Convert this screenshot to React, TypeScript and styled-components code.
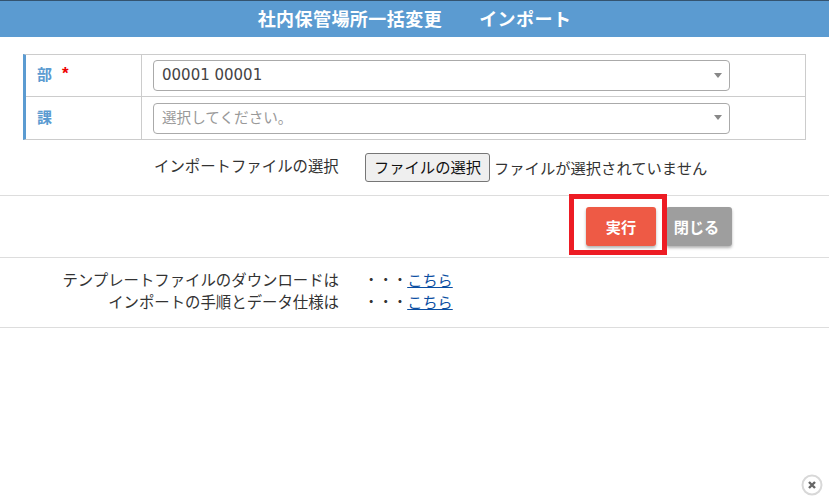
import styled, { createGlobalStyle } from "styled-components";

const GlobalStyle = createGlobalStyle`
  html, body {
    margin: 0;
    padding: 0;
    background: #fff;
    overflow: hidden;
  }
  body {
    font-family: "Liberation Sans", "Noto Sans CJK JP", sans-serif;
    color: #333;
  }
`;

const Pagina = styled.div`
  position: relative;
  width: 829px;
  height: 502px;
  background: #fff;
`;

const Cabecalho = styled.header`
  height: 37px;
  border-top: 1px solid #34536f;
  background: #5b9bd1;
  color: #fff;
  font-size: 18px;
  letter-spacing: 0.45px;
  font-weight: 700;
  display: flex;
  align-items: center;
  justify-content: center;
  gap: 37px;
  padding-bottom: 3px;
  box-sizing: border-box;
`;

const Tabela = styled.div`
  margin: 17px 23px 0 23px;
  border: 1px solid #ccc;
  border-left: 3px solid #5b9bd1;
  display: grid;
  grid-template-columns: 116px 1fr;
  grid-auto-rows: 42px;
`;

const Rotulo = styled.div<{ $ultimo?: boolean }>`
  display: flex;
  align-items: center;
  padding: 0 0 ${(p) => (p.$ultimo ? "3px" : "4px")} 11px;
  box-sizing: border-box;
  color: #5b9bd1;
  font-size: 15px;
  font-weight: 700;
  border-right: 1px solid #ccc;
  border-bottom: ${(p) => (p.$ultimo ? "none" : "1px solid #ccc")};
`;

const Obrigatorio = styled.span`
  color: #e00;
  margin-left: 10px;
  font-size: 17px;
`;

const Celula = styled.div<{ $ultimo?: boolean }>`
  display: flex;
  align-items: center;
  padding-left: 11px;
  border-bottom: ${(p) => (p.$ultimo ? "none" : "1px solid #ccc")};
`;

const Selecao = styled.div<{ $vazio?: boolean }>`
  width: 577px;
  height: 31px;
  box-sizing: border-box;
  border: 1px solid #aaa;
  border-radius: 4px;
  padding: 0 0 ${(p) => (p.$vazio ? "3px" : "2px")} 8px;
  display: flex;
  align-items: center;
  justify-content: space-between;
  font-family: "DejaVu Sans", "Noto Sans CJK JP", sans-serif;
  font-size: ${(p) => (p.$vazio ? "14.6px" : "15px")};
  color: ${(p) => (p.$vazio ? "#999" : "#444")};
`;

const Seta = styled.span`
  width: 0;
  height: 0;
  margin: 2px 7px 0 0;
  border-left: 4px solid transparent;
  border-right: 4px solid transparent;
  border-top: 5px solid #888;
`;

const LinhaArquivo = styled.div`
  height: 55px;
  display: flex;
  align-items: center;
  padding-left: 154px;
  font-size: 15.3px;
  color: #333;
`;

const RotuloArquivo = styled.span`
  width: 211px;
  margin-top: -5px;
  font-size: 15.4px;
  white-space: nowrap;
`;

const BotaoArquivo = styled.button`
  width: 125px;
  height: 29px;
  padding: 0 0 2px;
  margin: -1px 5px 0 0;
  box-sizing: border-box;
  border: 1px solid #767676;
  border-radius: 3px;
  background: #efefef;
  color: #111;
  font: inherit;
`;

const TextoArquivo = styled.span`
  margin: -2px 0 0 -1px;
`;

const Divisor = styled.hr`
  margin: 0;
  border: 0;
  border-top: 1px solid #ddd;
`;

const Acoes = styled.div`
  height: 61px;
  box-sizing: border-box;
  padding: 11px 97px 0 0;
  display: flex;
  justify-content: flex-end;
  align-items: flex-start;
  gap: 10px;
`;

const BotaoAcao = styled.button<{ $cor: string; $largura: number; $recuo?: number }>`
  width: ${(p) => p.$largura}px;
  height: 39px;
  padding: 0 ${(p) => p.$recuo ?? 0}px 2px 0;
  border: 0;
  border-radius: 3px;
  background: ${(p) => p.$cor};
  color: #fff;
  font-family: inherit;
  font-size: 15.2px;
  font-weight: 700;
  box-shadow: 0 2px 3px rgba(0, 0, 0, 0.3);
`;

const Destaque = styled.div`
  position: absolute;
  left: 569px;
  top: 194px;
  width: 98px;
  height: 61px;
  box-sizing: border-box;
  border: 5px solid #ed1c24;
`;

const Avisos = styled.div`
  height: 69px;
  box-sizing: border-box;
  padding-top: 10px;
  display: grid;
  grid-template-columns: 339px 1fr;
  grid-auto-rows: 22px;
  align-items: center;
  font-size: 15.4px;
  color: #333;
`;

const AvisoTexto = styled.div`
  text-align: right;
  white-space: nowrap;
`;

const AvisoLink = styled.div`
  padding-left: 25px;
  display: flex;
  font-size: 14.4px;
  a {
    color: #0b4ea2;
    font-size: 15.2px;
    text-decoration: underline;
  }
`;

const Fechar = styled.svg`
  position: absolute;
  left: 801px;
  top: 474px;
`;

export default function App() {
  return (
    <Pagina>
      <GlobalStyle />
      <Cabecalho>
        <span>社内保管場所一括変更</span>
        <span>インポート</span>
      </Cabecalho>
      <Tabela>
        <Rotulo>
          部<Obrigatorio>*</Obrigatorio>
        </Rotulo>
        <Celula>
          <Selecao>
            00001 00001
            <Seta />
          </Selecao>
        </Celula>
        <Rotulo $ultimo>課</Rotulo>
        <Celula $ultimo>
          <Selecao $vazio>
            選択してください。
            <Seta />
          </Selecao>
        </Celula>
      </Tabela>
      <LinhaArquivo>
        <RotuloArquivo>インポートファイルの選択</RotuloArquivo>
        <BotaoArquivo>ファイルの選択</BotaoArquivo>
        <TextoArquivo>ファイルが選択されていません</TextoArquivo>
      </LinhaArquivo>
      <Divisor />
      <Acoes>
        <BotaoAcao $cor="#ee5a45" $largura={70}>実行</BotaoAcao>
        <BotaoAcao $cor="#9e9e9e" $largura={66} $recuo={5}>閉じる</BotaoAcao>
      </Acoes>
      <Divisor />
      <Avisos>
        <AvisoTexto>テンプレートファイルのダウンロードは</AvisoTexto>
        <AvisoLink>・・・<a href="#a">こちら</a></AvisoLink>
        <AvisoTexto>インポートの手順とデータ仕様は</AvisoTexto>
        <AvisoLink>・・・<a href="#b">こちら</a></AvisoLink>
      </Avisos>
      <Divisor />
      <Destaque />
      <Fechar width="22" height="22" viewBox="0 0 22 22">
        <circle cx="11" cy="11" r="9.5" fill="#fff" stroke="#d8d8d8" strokeWidth="2" />
        <path d="M8 8 L14 14 M14 8 L8 14" stroke="#666" strokeWidth="2.4" />
      </Fechar>
    </Pagina>
  );
}
